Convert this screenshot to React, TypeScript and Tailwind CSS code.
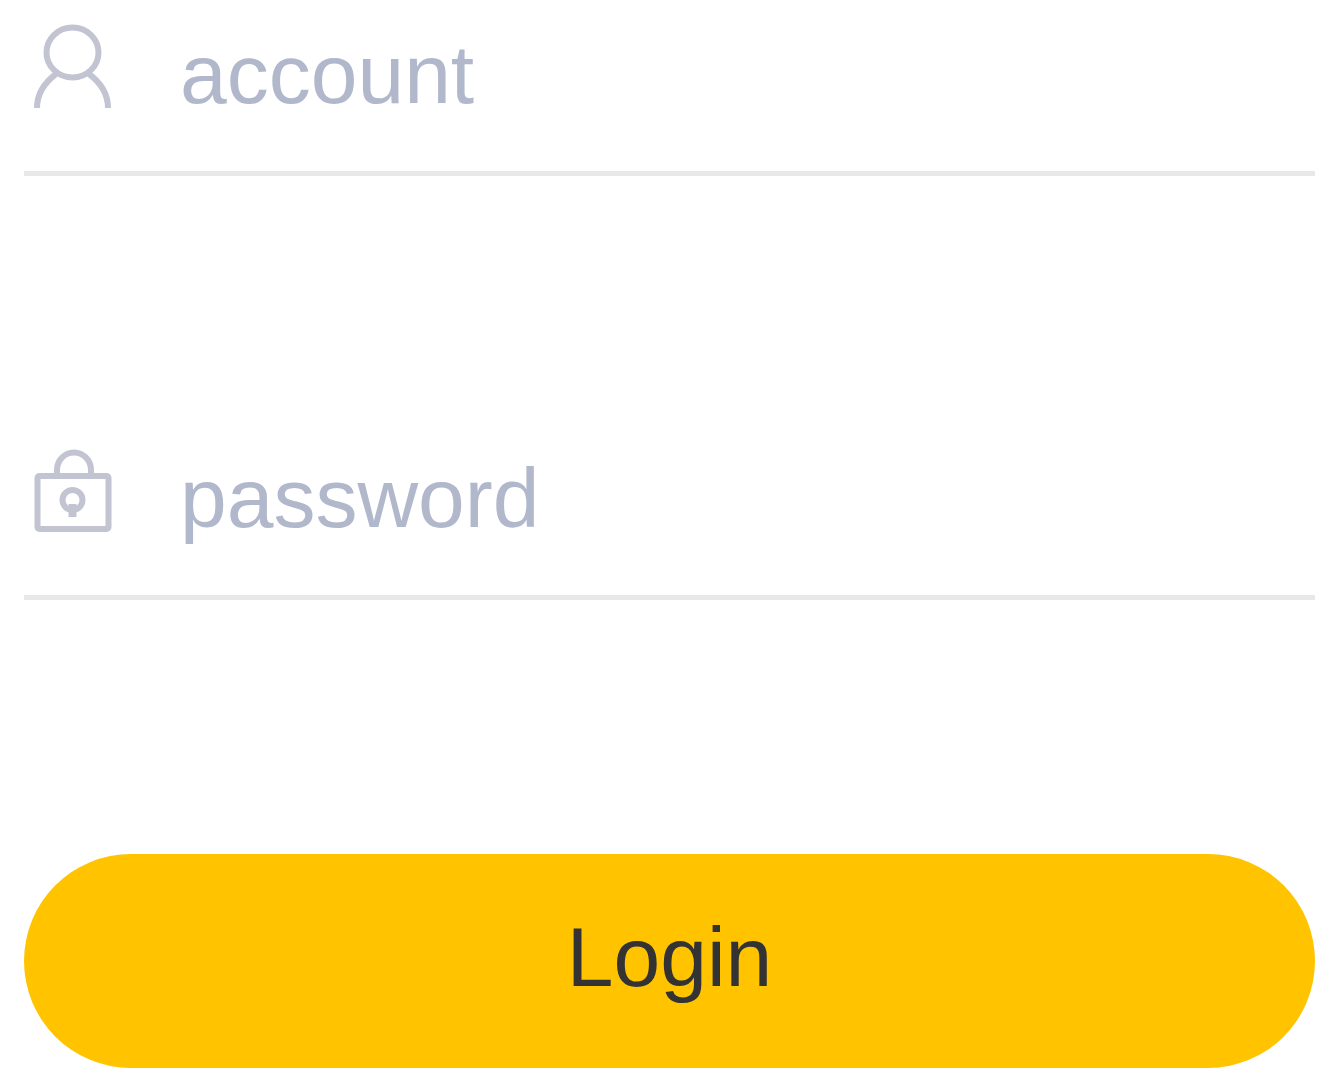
import type { ReactNode } from "react";

function UserIcon() {
  return (
    <svg
      className="h-[84px] w-20"
      viewBox="0 0 80 84"
      fill="none"
      stroke="currentColor"
      strokeWidth="6"
      aria-hidden="true"
    >
      <ellipse cx="40.500" cy="28.500" rx="26" ry="25" />
      <path d="M5 84C5 69 12 59 24 50M57 50C69 59 76 69 76 84" />
    </svg>
  );
}

function LockIcon() {
  return (
    <svg
      className="h-[84px] w-20"
      viewBox="0 0 80 84"
      fill="none"
      stroke="currentColor"
      strokeWidth="6"
      aria-hidden="true"
    >
      <rect x="5.500" y="28" width="71" height="53" rx="2" />
      <path d="M25 27v-5a17 17.500 0 0 1 34 0v5" />
      <circle cx="40.500" cy="52" r="10" />
      <path d="M40.500 56v13" strokeWidth="8" />
    </svg>
  );
}

interface FieldProps {
  id: string;
  type: string;
  icon: ReactNode;
}

function Field({ id, type, icon }: FieldProps) {
  return (
    <div className="flex h-44 items-start border-b-5 border-[#e8e8e8] pt-6 pl-2">
      <label htmlFor={id} className="text-[#c2c4d2]">
        {icon}
      </label>
      <input
        id={id}
        type={type}
        placeholder={id}
        aria-label={id}
        className="ml-17 h-25 min-w-0 flex-1 bg-transparent text-[84px] text-[#333] outline-none placeholder:text-[#b1b8cb] placeholder:opacity-100"
      />
    </div>
  );
}

export default function App() {
  return (
    <form
      className="min-h-screen bg-white pr-[22px] pl-6 font-['Liberation_Sans',Arial,sans-serif]"
      onSubmit={(e) => e.preventDefault()}
    >
      <Field id="account" type="text" icon={<UserIcon />} />
      <div className="mt-62">
        <Field id="password" type="password" icon={<LockIcon />} />
      </div>
      <button
        type="submit"
        className="mt-[254px] h-[214px] w-full rounded-full bg-[#ffc300] pb-2 text-[84px] text-[#333]"
      >
        Login
      </button>
    </form>
  );
}
